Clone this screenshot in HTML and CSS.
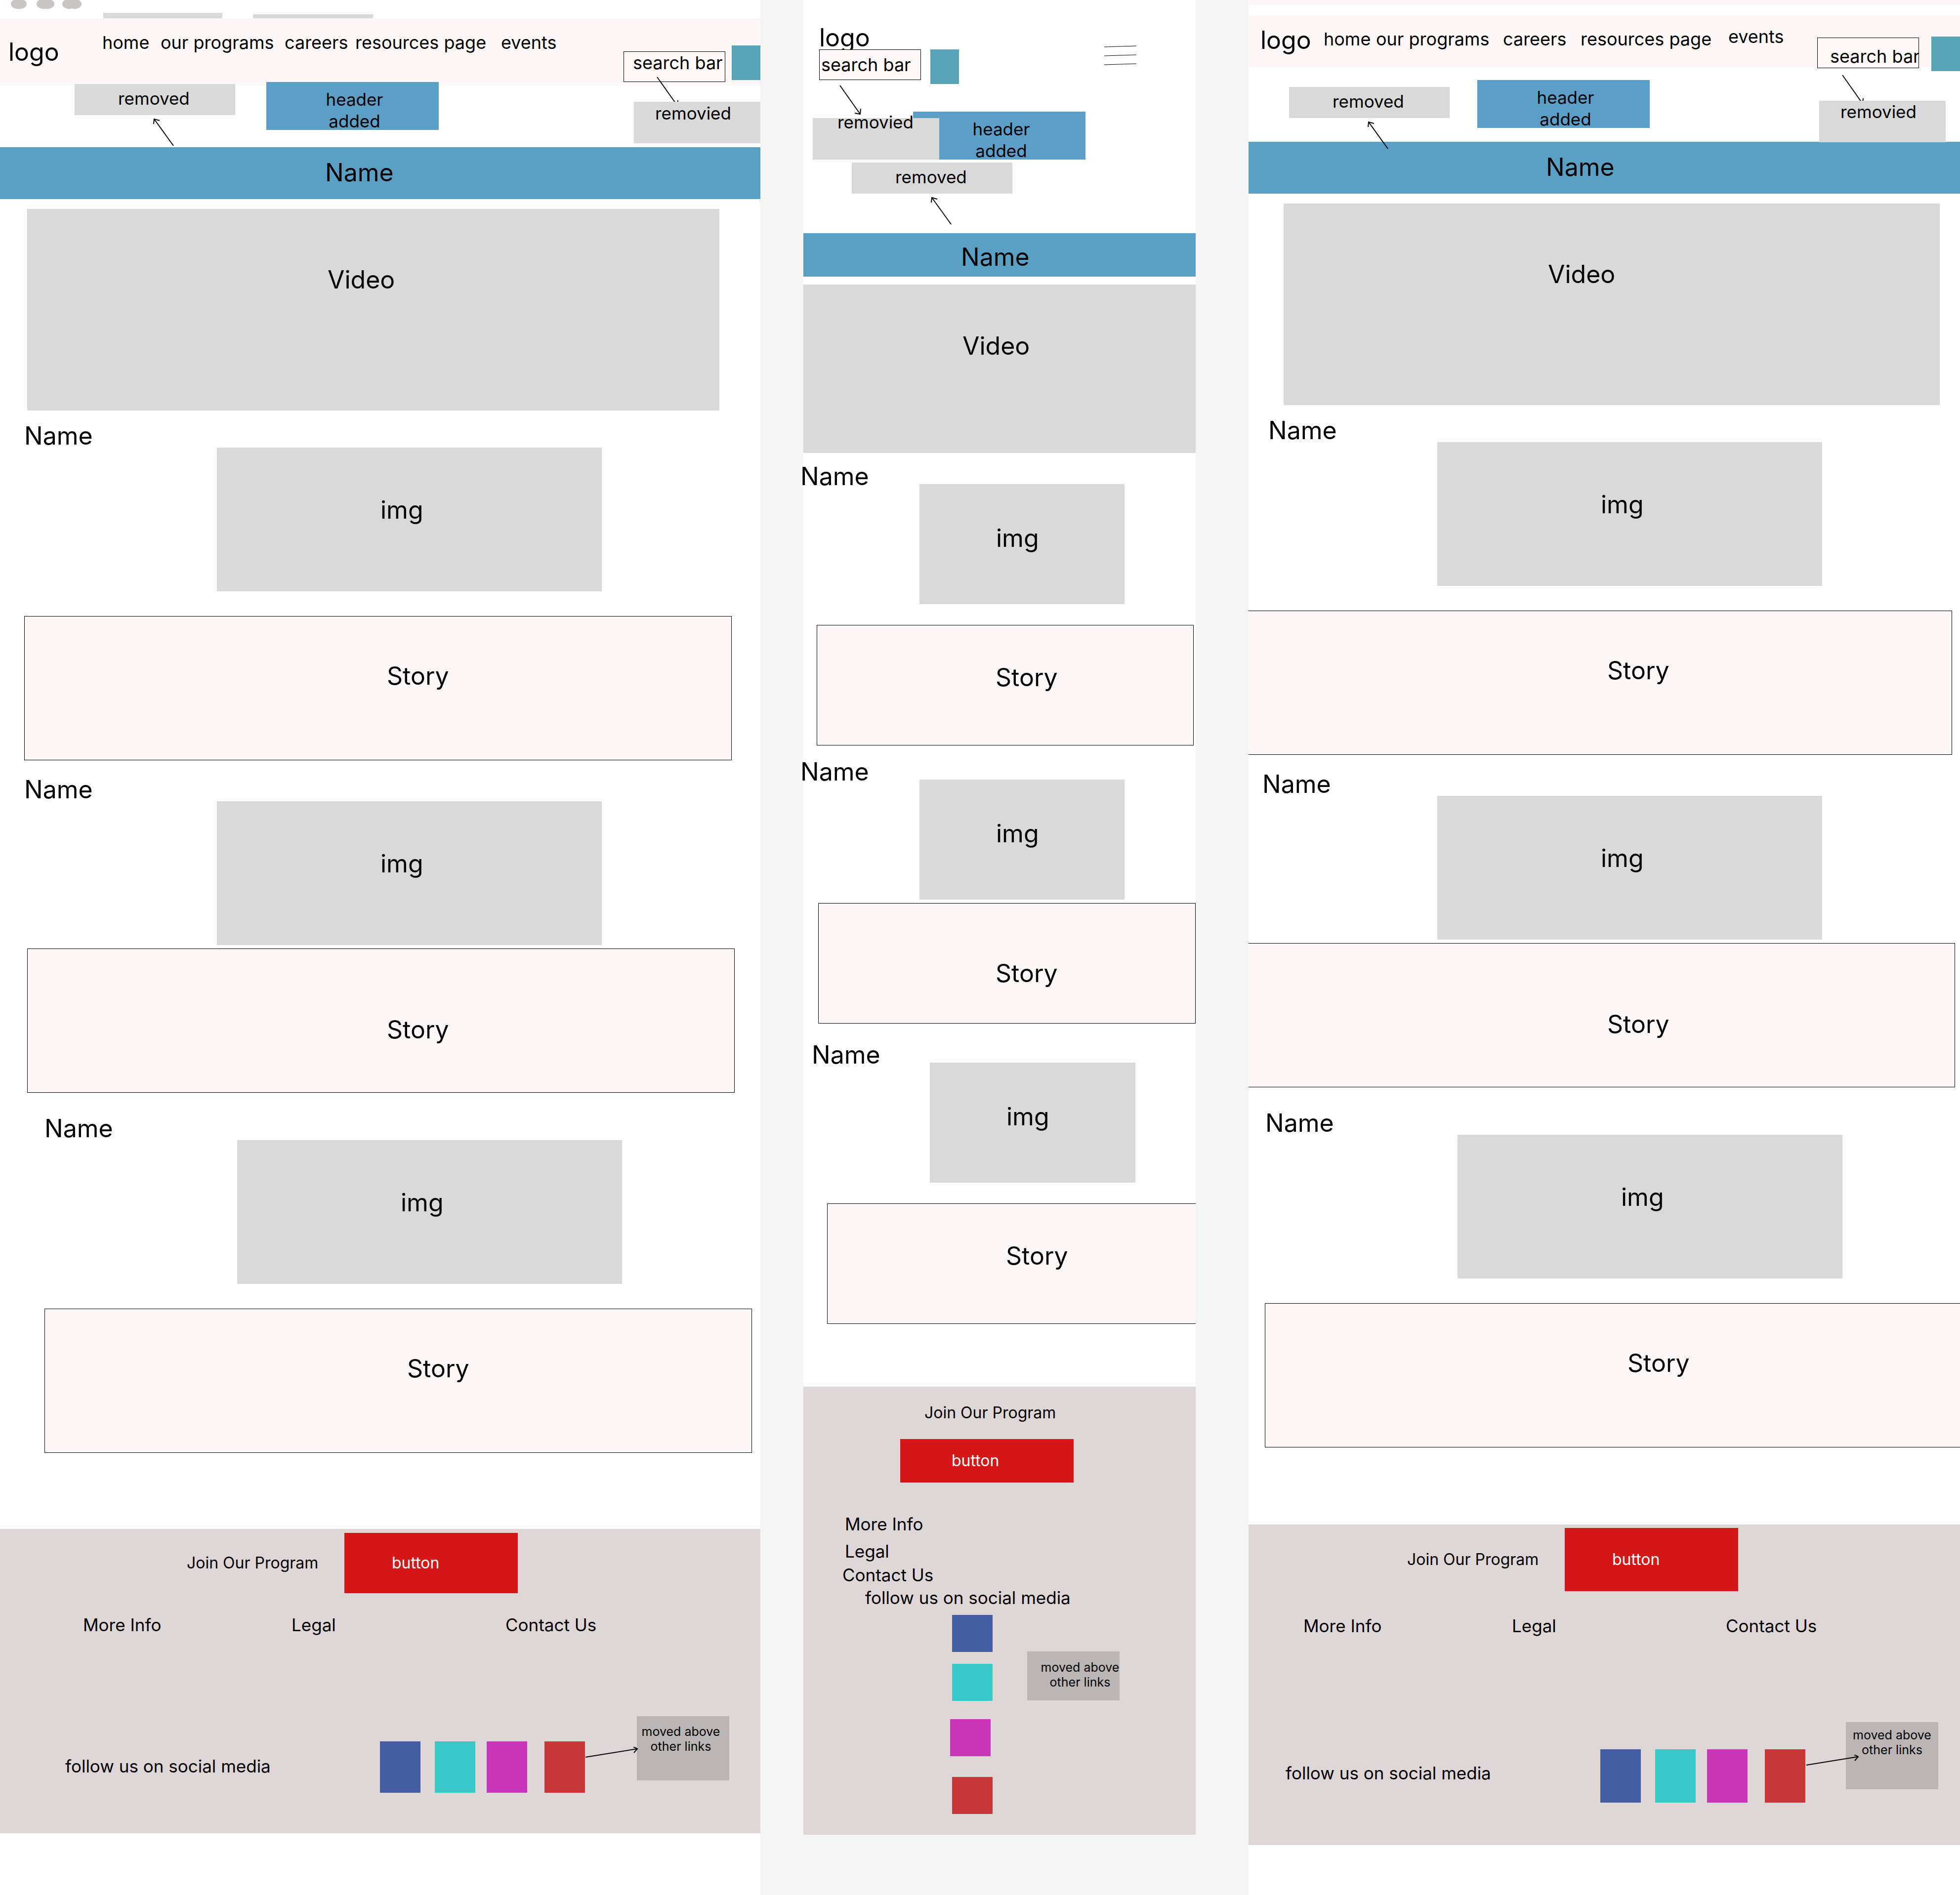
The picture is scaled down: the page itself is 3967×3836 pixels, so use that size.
FILE: index.html
```html
<!DOCTYPE html>
<html lang="en">
<head>
<meta charset="utf-8">
<meta name="viewport" content="width=device-width, initial-scale=1">
<title>Wireframes</title>
<link rel="stylesheet" href="styles.css">
</head>
<body>
<svg class="defs" aria-hidden="true">
  <symbol id="arrow-up" viewBox="0 0 44 60"><path d="M41 56 2 2M1 12 2 2l11 3"/></symbol>
  <symbol id="arrow-down" viewBox="0 0 48 64"><path d="M2 2l41 58M44 49l-1 11-11-2"/></symbol>
  <symbol id="arrow-right" viewBox="0 0 112 28"><path d="M1 21 106 4M98 0l8 4-7 8"/></symbol>
</svg>
<main class="board">

  <section class="frame wide desktop">
    <div class="chrome">
      <svg class="dots" width="170" height="37" viewBox="0 0 170 37" aria-hidden="true">
        <ellipse cx="36" cy="8" rx="14" ry="10"/><ellipse cx="40" cy="8" rx="14" ry="10"/>
        <ellipse cx="88" cy="8" rx="14" ry="10"/><ellipse cx="96" cy="8" rx="14" ry="10"/>
        <ellipse cx="140" cy="8" rx="14" ry="10"/><ellipse cx="151" cy="8" rx="14" ry="10"/>
      </svg>
      <span class="tab"></span>
      <span class="tab tab-low"></span>
    </div>
    <header class="site-header">
      <div class="logo">logo</div>
      <nav class="nav">
        <a href="#">home</a><a href="#">our programs</a><a href="#">careers</a><a href="#">resources page</a><a href="#">events</a>
      </nav>
      <input class="search" type="text" value="search bar" aria-label="Search">
      <button class="go" type="button" aria-label="Go"></button>
    </header>
    <div class="notes">
      <div class="note note-removed">removed</div>
      <svg class="arrow arrow-a" width="44" height="60"><use href="#arrow-up"/></svg>
      <div class="note note-added">header<br>added</div>
      <svg class="arrow arrow-b" width="48" height="64"><use href="#arrow-down"/></svg>
      <div class="note note-search">removied</div>
    </div>
    <h1 class="banner">Name</h1>
    <div class="video">Video</div>
    <article class="entry first">
      <h2 class="name">Name</h2>
      <div class="image">img</div>
      <div class="story">Story</div>
    </article>
    <article class="entry second">
      <h2 class="name">Name</h2>
      <div class="image">img</div>
      <div class="story">Story</div>
    </article>
    <article class="entry third">
      <h2 class="name">Name</h2>
      <div class="image">img</div>
      <div class="story">Story</div>
    </article>
    <footer class="footer">
      <div class="join">
        <span class="join-text">Join Our Program</span>
        <button class="cta" type="button">button</button>
      </div>
      <nav class="links">
        <a href="#">More Info</a><a href="#">Legal</a><a href="#">Contact Us</a>
      </nav>
      <div class="social">
        <span class="follow">follow us on social media</span>
        <div class="icons">
          <a class="icon blue" href="#" aria-label="Blue"></a>
          <a class="icon cyan" href="#" aria-label="Cyan"></a>
          <a class="icon pink" href="#" aria-label="Pink"></a>
          <a class="icon red" href="#" aria-label="Red"></a>
        </div>
        <div class="moved">moved above<br>other links</div>
        <svg class="arrow arrow-c" width="112" height="28"><use href="#arrow-right"/></svg>
      </div>
    </footer>
  </section>

  <section class="frame mobile">
    <header class="mobile-header">
      <div>
        <div class="logo">logo</div>
        <div class="search-row">
          <input class="search" type="text" value="search bar" aria-label="Search">
          <button class="go" type="button" aria-label="Go"></button>
        </div>
      </div>
      <button class="menu" type="button" aria-label="Menu">
        <svg width="65" height="40" viewBox="0 0 65 40"><path d="M0 3 65 1M0 21l65-2M0 39l65-2"/></svg>
      </button>
    </header>
    <div class="notes">
      <svg class="arrow arrow-b" width="48" height="64"><use href="#arrow-down"/></svg>
      <div class="note note-added">header<br>added</div>
      <div class="note note-search"><div class="raised">removied</div></div>
      <div class="note note-removed">removed</div>
      <svg class="arrow arrow-a" width="44" height="60"><use href="#arrow-up"/></svg>
    </div>
    <h1 class="banner">Name</h1>
    <div class="video">Video</div>
    <article class="entry first">
      <h2 class="name">Name</h2>
      <div class="image">img</div>
      <div class="story">Story</div>
    </article>
    <article class="entry second">
      <h2 class="name">Name</h2>
      <div class="image">img</div>
      <div class="story">Story</div>
    </article>
    <article class="entry third">
      <h2 class="name">Name</h2>
      <div class="image">img</div>
      <div class="story">Story</div>
    </article>
    <footer class="footer">
      <div class="join">
        <span class="join-text">Join Our Program</span>
        <button class="cta" type="button">button</button>
      </div>
      <nav class="links">
        <a href="#">More Info</a><a class="legal" href="#">Legal</a><a class="contact" href="#">Contact Us</a>
      </nav>
      <div class="social">
        <span class="follow">follow us on social media</span>
        <div class="icons">
          <a class="icon blue" href="#" aria-label="Blue"></a>
          <a class="icon cyan" href="#" aria-label="Cyan"></a>
          <a class="icon pink" href="#" aria-label="Pink"></a>
          <a class="icon red" href="#" aria-label="Red"></a>
        </div>
        <div class="moved">moved above<br>other links</div>
      </div>
    </footer>
  </section>

  <section class="frame wide tablet">
    <div class="strip"></div>
    <header class="site-header">
      <div class="logo">logo</div>
      <nav class="nav">
        <a href="#">home</a><a href="#">our programs</a><a href="#">careers</a><a href="#">resources page</a><a class="events" href="#">events</a>
      </nav>
      <input class="search" type="text" value="search bar" aria-label="Search">
      <button class="go" type="button" aria-label="Go"></button>
    </header>
    <div class="notes">
      <div class="note note-removed">removed</div>
      <svg class="arrow arrow-a" width="44" height="60"><use href="#arrow-up"/></svg>
      <div class="note note-added">header<br>added</div>
      <svg class="arrow arrow-b" width="48" height="64"><use href="#arrow-down"/></svg>
      <div class="note note-search">removied</div>
    </div>
    <h1 class="banner">Name</h1>
    <div class="video">Video</div>
    <article class="entry first">
      <h2 class="name">Name</h2>
      <div class="image">img</div>
      <div class="story">Story</div>
    </article>
    <article class="entry second">
      <h2 class="name">Name</h2>
      <div class="image">img</div>
      <div class="story">Story</div>
    </article>
    <article class="entry third">
      <h2 class="name">Name</h2>
      <div class="image">img</div>
      <div class="story">Story</div>
    </article>
    <footer class="footer">
      <div class="join">
        <span class="join-text">Join Our Program</span>
        <button class="cta" type="button">button</button>
      </div>
      <nav class="links">
        <a href="#">More Info</a><a href="#">Legal</a><a href="#">Contact Us</a>
      </nav>
      <div class="social">
        <span class="follow">follow us on social media</span>
        <div class="icons">
          <a class="icon blue" href="#" aria-label="Blue"></a>
          <a class="icon cyan" href="#" aria-label="Cyan"></a>
          <a class="icon pink" href="#" aria-label="Pink"></a>
          <a class="icon red" href="#" aria-label="Red"></a>
        </div>
        <div class="moved">moved above<br>other links</div>
        <svg class="arrow arrow-c" width="112" height="28"><use href="#arrow-right"/></svg>
      </div>
    </footer>
  </section>

</main>
</body>
</html>
```
FILE: styles.css
```css
* { box-sizing: border-box; }

body {
  margin: 0;
  background: #f5f5f5;
  color: #000;
  font: 400 36px/44px Inter, "Liberation Sans", sans-serif;
}

a { color: inherit; text-decoration: none; white-space: nowrap; }

button {
  border: 0;
  padding: 0;
  margin: 0;
  font: inherit;
  color: inherit;
  background: none;
}

.defs { position: absolute; width: 0; height: 0; }

/* Three frames side by side; the phone frame ends above the bottom.
   The gutters differ: 87px before the phone frame, 107px after it. */
.board {
  display: grid;
  grid-template-columns: minmax(0, 1539fr) 988px minmax(0, 1440fr);
  min-height: 100vh;
  overflow: hidden;
}

.frame { min-width: 0; background: #fff; }
.wide { overflow: hidden; }
.mobile { align-self: start; margin: 0 107px 0 87px; }

.logo, .banner, .video, .name, .image, .story {
  font-size: 50px;
  font-weight: 400;
  line-height: 48px;
}

/* Top of the frames */
.chrome { display: flex; align-items: flex-end; height: 37px; }
.dots { flex: none; margin-right: 39px; fill: #cac5c5; }
.tab { width: 241px; height: 11px; margin-right: 62px; background: #d9d9d9; }
.tab-low { width: 243px; height: 8px; }
.strip { height: 31px; background: linear-gradient(#fdf7f7 10px, #fff 10px); }

.site-header {
  display: flex;
  align-items: flex-start;
  height: 136px;
  background: #fdf7f7;
}
.site-header .logo { flex: none; width: 191px; padding: 44px 0 0 17px; }
.nav {
  flex: 1;
  display: grid;
  grid-template-columns: 118px 251px 143px 295px auto;
  margin: 27px 0 0 16px;
}
.search {
  flex: none;
  width: 206px;
  height: 62px;
  margin: 0;
  padding: 0 0 0 3px;
  border: 1px solid #000;
  border-radius: 0;
  background: #fff8f8;
  color: #000;
  font: inherit;
  position: relative;
}
.go { flex: none; width: 58px; height: 70px; background: #58a4b7; }
.desktop .search { margin-top: 67px; padding: 0 0 16px 18px; }
.desktop .go { margin: 55px 0 0 13px; }

.tablet .site-header { height: 105px; }
.tablet .logo { width: 152px; padding: 26px 0 0 24px; }
.tablet .nav {
  grid-template-columns: 106px 257px 157px 299px auto;
  align-items: end;
  height: 49px;
  margin: 21px 0 0;
}
.tablet .events { align-self: start; }
.tablet .search { margin-top: 45px; padding: 14px 0 0 25px; }
.tablet .go { margin: 43px 0 0 25px; }

.mobile-header {
  display: flex;
  justify-content: space-between;
  align-items: flex-start;
  height: 170px;
  padding: 52px 120px 0 32px;
}
.search-row { display: flex; gap: 19px; }
.menu { margin-top: 40px; height: 40px; }
.menu svg { display: block; fill: none; stroke: #000; stroke-width: 1; }

/* Review notes pinned over the layout */
.notes { position: relative; z-index: 1; height: 125px; }
.tablet .notes { height: 151px; }
.mobile .notes { height: 302px; }

.note { position: absolute; background: #d9d9d9; font-size: 35px; }
.note-removed { width: 325px; height: 63px; padding: 7px 0 0 88px; }
.note-added {
  width: 349px;
  height: 97px;
  padding: 13px 0 0 8px;
  background: #5b9fc9;
  text-align: center;
}
.note-search { width: 256px; height: 84px; padding: 1px 0 0 43px; }
.arrow { position: absolute; fill: none; stroke: #000; stroke-width: 2; overflow: visible; }

.desktop .note-removed { left: 151px; top: -3px; }
.desktop .arrow-a { left: 310px; top: 66px; }
.desktop .note-added { left: 539px; top: -7px; }
.desktop .arrow-b { left: 1328px; top: -19px; }
.desktop .note-search { left: 1283px; top: 33px; }

.tablet .note-removed { left: 82px; top: 40px; }
.tablet .arrow-a { left: 241px; top: 109px; }
.tablet .note-added { left: 463px; top: 26px; }
.tablet .arrow-b { left: 1200px; top: 14px; }
.tablet .note-search { left: 1155px; top: 68px; padding-top: 0; }

.mobile .note-removed { left: 98px; top: 159px; }
.mobile .arrow-a { left: 258px; top: 228px; }
.mobile .note-added { left: 222px; top: 56px; }
.mobile .arrow-b { left: 72px; top: 1px; }
.mobile .note-search { left: 19px; top: 69px; padding: 0 0 0 50px; }
.raised { margin-top: -14px; }

/* Banner and video */
.banner { height: 105px; margin: 0; padding: 27px 0 0 658px; background: #5a9fc4; }
.video { height: 408px; margin: 20px 83px 27px 55px; padding: 119px 0 0 608px; background: #d9d9d9; }
.tablet .banner { padding-left: 602px; }
.tablet .video { margin-left: 71px; margin-right: 41px; padding-left: 535px; }
.mobile .banner { height: 88px; padding: 24px 0 0 319px; }
.mobile .video { height: 341px; margin: 16px 0 23px; padding: 100px 0 0 322px; }

/* Name, picture and story blocks */
.name { margin: 0; }
.image { height: 291px; padding: 102px 0 0 331px; background: #d9d9d9; }
.story {
  height: 292px;
  margin-top: 50px;
  padding: 96px 0 0 733px;
  border: 1px solid #000;
  background: #fdf7f7;
}
.second { margin: 35px 0 48px; }
.second .story { margin-top: 7px; padding-top: 139px; padding-left: 727px; }

.desktop .name { margin-left: 49px; }
.desktop .image { margin-left: 439px; margin-right: 321px; }
.desktop .story { margin-left: 49px; margin-right: 58px; }
.desktop .second .story { margin-left: 55px; margin-right: 52px; }
.desktop .third .name { margin-left: 90px; }
.desktop .third .image { margin-left: 480px; margin-right: 280px; }
.desktop .third .story { margin-left: 90px; margin-right: 17px; }

.tablet .name { margin-left: 40px; }
.tablet .image { margin-left: 382px; margin-right: 279px; }
.tablet .story { margin-left: -8px; margin-right: 16px; }
.tablet .second .name { margin-left: 28px; }
.tablet .second .story { margin-left: -2px; margin-right: 10px; }
.tablet .third .name { margin-left: 34px; }
.tablet .third .image { margin-left: 423px; margin-right: 238px; }
.tablet .third .story { margin-left: 33px; margin-right: -25px; }

.mobile .name { margin: 0 0 -8px -6px; }
.mobile .image { height: 243px; margin-left: 235px; margin-right: 144px; padding: 85px 0 0 155px; }
.mobile .story { height: 244px; margin: 42px 4px 0 27px; padding: 81px 0 0 361px; }
.mobile .second { margin: 29px 0 39px; }
.mobile .second .story { margin: 7px 0 0 30px; padding: 117px 0 0 358px; }
.mobile .third { overflow: hidden; }
.mobile .third .name { margin-left: 17px; }
.mobile .third .image { margin-left: 256px; margin-right: 122px; }
.mobile .third .story { margin: 42px -18px 0 48px; }

/* Footer */
.footer { height: 616px; margin-top: 154px; padding-top: 8px; background: #dfd6d7; }
.join { display: flex; align-items: center; font-size: 32px; line-height: 40px; }
.join-text { flex: none; width: 319px; white-space: nowrap; }
.cta {
  width: 351px;
  height: 122px;
  padding-left: 96px;
  background: #d41717;
  color: #fff;
  text-align: left;
}
.links, .social { font-size: 35px; }
.links { display: grid; grid-template-columns: 422px 433px auto; margin-top: 42px; }
.social { position: relative; display: flex; align-items: center; margin-top: 214px; }
.follow { flex: none; width: 637px; padding-bottom: 5px; }
.icons { display: grid; grid-template-columns: 111px 105px 117px 82px; }
.icon { width: 82px; height: 104px; }
.blue { background: #435ea3; }
.cyan { background: #3ac9c9; }
.pink { background: #c936ba; }
.red { background: #c93838; }
.moved {
  position: absolute;
  width: 187px;
  height: 130px;
  background: #bbb5b5;
  font-size: 25px;
  line-height: 30px;
  text-align: center;
  white-space: nowrap;
}

.desktop .join { padding-left: 378px; }
.desktop .links { padding-left: 168px; }
.desktop .social { padding-left: 132px; }
.desktop .moved { left: 1289px; top: -51px; padding: 16px 9px 0 0; }
.desktop .arrow-c { left: 1184px; top: 11px; }

.tablet .footer { height: 649px; margin-top: 156px; padding-top: 7px; }
.tablet .join { padding-left: 321px; }
.tablet .cta { height: 128px; }
.tablet .links { margin-top: 48px; padding-left: 111px; }
.tablet .social { margin-top: 228px; padding-left: 75px; }
.tablet .follow { padding-bottom: 13px; }
.tablet .icon { height: 108px; }
.tablet .moved { left: 1209px; top: -55px; height: 136px; padding-top: 11px; }
.tablet .arrow-c { left: 1128px; top: 11px; }

.mobile .footer { height: 907px; margin-top: 127px; padding-top: 33px; }
.mobile .join { display: block; padding-left: 196px; }
.mobile .join-text { display: block; padding-left: 49px; }
.mobile .cta { display: block; height: 88px; margin-top: 33px; padding-left: 104px; }
.mobile .links { display: flex; flex-direction: column; margin-top: 62px; padding-left: 84px; }
.mobile .legal { margin-top: 11px; }
.mobile .contact { margin: 4px 0 2px -5px; }
.mobile .social { display: block; margin: 0; }
.mobile .follow { display: block; padding: 0; margin: 0 0 13px 125px; }
.mobile .icons { display: flex; flex-direction: column; padding-left: 301px; }
.mobile .icon { height: 75px; }
.mobile .cyan { margin: 24px 0 37px; }
.mobile .pink { margin: 0 0 42px -4px; }
.mobile .moved { left: 453px; top: 131px; height: 99px; padding: 17px 0 0 27px; }
```
